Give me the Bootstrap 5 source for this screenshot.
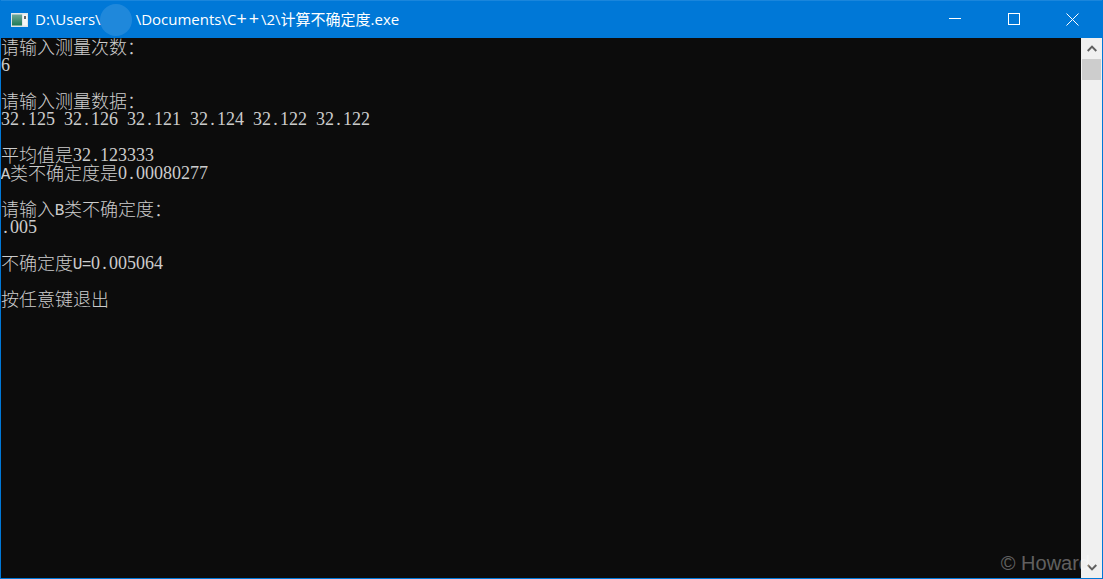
<!DOCTYPE html>
<html lang="zh">
<head>
<meta charset="utf-8">
<title>计算不确定度</title>
<link rel="stylesheet" href="https://cdn.jsdelivr.net/npm/bootstrap@5.3.0/dist/css/bootstrap.min.css">
<style>
html,body{height:100%;margin:0;overflow:hidden;background:#0c0c0c}
.win-frame{height:579px;width:1103px;border:1px solid #0078d7;border-top:0}
.win-title{height:38px;background:#0078d7;color:#fff;font:15px/1 "Open Sans","Noto Sans CJK SC",sans-serif;margin:0 -1px;padding-left:11px;border-top:1px solid #1a86dc}
.win-title-text{margin-left:7px;margin-bottom:2px;white-space:nowrap;line-height:20px;height:20px}
.blur-name{display:inline-block;width:35px}
.wide-plus{font-size:18px;line-height:0;letter-spacing:2px}
.blur-disc{position:absolute;left:100px;top:3px;width:32px;height:32px;border-radius:50%;background:rgba(255,255,255,.12)}
.win-controls{padding-right:1px;align-self:flex-start}
.win-btn{width:59px;height:36px}
.win-body{min-height:0;background:#0c0c0c}
.console{color:#cccccc;font:300 18px/18px "Liberation Serif","Noto Sans CJK SC",serif;white-space:pre;min-width:0}
.console div{height:18px}
.hanzi{vertical-align:-1px}
.cell{display:inline-block;width:9px;text-align:center}
.cell-cap{display:inline-block;width:9px;text-align:center;font:16px/18px "Liberation Mono",monospace}
.cell-cap-inner{margin:0 -1px}
.sbar{width:21px;background:#f0f0f0}
.sbar-btn{height:21px}
.sbar-thumb{height:21px;background:#cdcdcd;margin:0 1px}
.watermark{position:absolute;right:12px;bottom:4px;color:rgba(255,255,255,.36);font:20px/1.1 "Liberation Sans",sans-serif;white-space:nowrap;pointer-events:none}
</style>
</head>
<body>
<div class="win-frame d-flex flex-column position-relative overflow-hidden">
  <header class="win-title d-flex align-items-center flex-shrink-0 position-relative">
    <svg width="17" height="14" viewBox="0 0 17 14" aria-hidden="true"><defs><linearGradient id="g" x1="0" y1="0" x2="0" y2="1"><stop offset="0" stop-color="#6fa89a"/><stop offset="1" stop-color="#1f7a55"/></linearGradient></defs><rect width="17" height="14" fill="#dfe6ea"/><rect x="1" y="1.5" width="10" height="11" fill="url(#g)"/><rect x="12" y="1.5" width="4" height="11" fill="#f6f6f6"/><rect x="13" y="3" width="2" height="3" fill="#666"/></svg>
    <span class="win-title-text">D:\Users\<span class="blur-name"></span>\Documents\C<span class="wide-plus">++</span>\2\计算不确定度.exe</span>
    <span class="blur-disc"></span>
    <div class="win-controls ms-auto d-flex">
      <div class="win-btn d-flex align-items-center justify-content-center"><svg width="12" height="12" viewBox="0 0 12 12"><path d="M0 5.5H12" stroke="#fff"/></svg></div>
      <div class="win-btn d-flex align-items-center justify-content-center"><svg width="12" height="12" viewBox="0 0 12 12"><rect x=".5" y=".5" width="11" height="11" fill="none" stroke="#fff"/></svg></div>
      <div class="win-btn d-flex align-items-center justify-content-center"><svg width="13" height="13" viewBox="0 0 13 13"><path d="M.5.5L12.5 12.5M12.5.5L.5 12.5" stroke="#fff"/></svg></div>
    </div>
  </header>
  <div class="win-body d-flex flex-grow-1">
    <main class="console flex-grow-1"><div><span class="hanzi">请输入测量次数：</span></div><div>6</div><div></div><div><span class="hanzi">请输入测量数据：</span></div><div>32<span class="cell">.</span>125<span class="cell"> </span>32<span class="cell">.</span>126<span class="cell"> </span>32<span class="cell">.</span>121<span class="cell"> </span>32<span class="cell">.</span>124<span class="cell"> </span>32<span class="cell">.</span>122<span class="cell"> </span>32<span class="cell">.</span>122</div><div></div><div><span class="hanzi">平均值是</span>32<span class="cell">.</span>123333</div><div><span class="cell-cap"><span class="cell-cap-inner">A</span></span><span class="hanzi">类不确定度是</span>0<span class="cell">.</span>00080277</div><div></div><div><span class="hanzi">请输入</span><span class="cell-cap"><span class="cell-cap-inner">B</span></span><span class="hanzi">类不确定度：</span></div><div><span class="cell">.</span>005</div><div></div><div><span class="hanzi">不确定度</span><span class="cell-cap"><span class="cell-cap-inner">U</span></span><span class="cell-cap"><span class="cell-cap-inner">=</span></span>0<span class="cell">.</span>005064</div><div></div><div><span class="hanzi">按任意键退出</span></div></main>
    <aside class="sbar d-flex flex-column flex-shrink-0">
      <div class="sbar-btn d-flex align-items-center justify-content-center"><svg width="10" height="7" viewBox="0 0 10 7"><path d="M.7 6L5 1.6 9.3 6" fill="none" stroke="#606060" stroke-width="2"/></svg></div>
      <div class="sbar-thumb"></div>
      <div class="flex-grow-1"></div>
      <div class="sbar-btn d-flex align-items-center justify-content-center"><svg width="10" height="7" viewBox="0 0 10 7"><path d="M.7 1L5 5.4 9.3 1" fill="none" stroke="#606060" stroke-width="2"/></svg></div>
    </aside>
  </div>
  <div class="watermark">© Howard</div>
</div>
<script src="https://cdn.jsdelivr.net/npm/bootstrap@5.3.0/dist/js/bootstrap.bundle.min.js"></script>
</body>
</html>
